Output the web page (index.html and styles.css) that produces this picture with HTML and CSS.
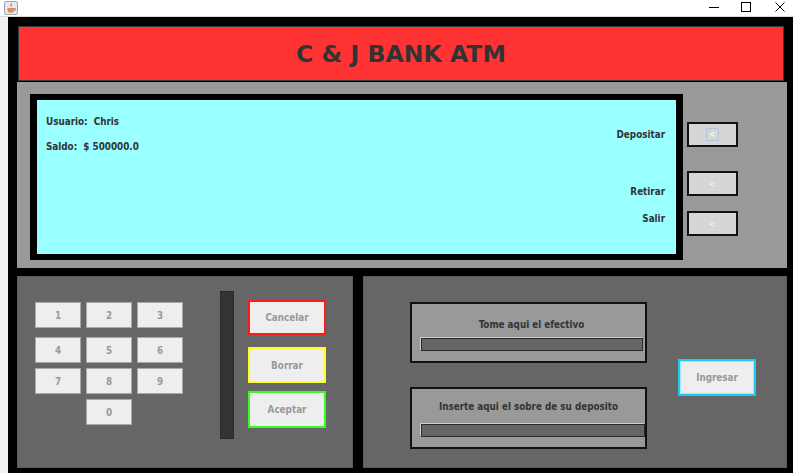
FILE: index.html
```html
<!DOCTYPE html>
<html lang="es">
<head>
    <meta charset="UTF-8">
    <meta name="viewport" content="width=device-width, initial-scale=1.0">
    <title>C &amp; J Bank ATM</title>
    <link rel="stylesheet" href="styles.css">
</head>
<body>
    <div class="titlebar">
        <svg class="app-icon" width="14" height="14" viewBox="0 0 14 14">
            <rect x="0.5" y="0.5" width="13" height="13" rx="1.5" fill="#e4e9f0" stroke="#98a6b8"/>
            <path d="M7 2.5c1.2 1 -0.8 1.8 0.2 3" stroke="#e2562b" stroke-width="1.1" fill="none"/>
            <path d="M3.5 7h6.5v2.2c0 1.6-1.4 2.6-3.2 2.6s-3.3-1-3.3-2.6z" fill="#f08a3a"/>
            <path d="M10 7.6h1c0.8 0 0.8 1.6 0 1.6h-1" stroke="#5b7fb0" stroke-width="0.9" fill="none"/>
        </svg>
        <div class="win-controls">
            <svg class="ctl ctl-min" width="10" height="10" viewBox="0 0 10 10"><path d="M0 5.5h10" stroke="#000" stroke-width="1"/></svg>
            <svg class="ctl ctl-max" width="10" height="10" viewBox="0 0 10 10"><rect x="0.5" y="0.5" width="9" height="9" fill="none" stroke="#000"/></svg>
            <svg class="ctl ctl-close" width="10" height="10" viewBox="0 0 10 10"><path d="M0.5 0.5l9 9M9.5 0.5l-9 9" stroke="#000" stroke-width="1"/></svg>
        </div>
    </div>

    <div class="frame">
        <header class="banner">C &amp; J BANK ATM</header>

        <section class="console">
            <div class="screen">
                <div class="info">
                    <p>Usuario:&nbsp; Chris</p>
                    <p>Saldo:&nbsp; $ 500000.0</p>
                </div>
                <div class="menu">
                    <p>Depositar</p>
                    <p class="menu-retirar">Retirar</p>
                    <p class="menu-salir">Salir</p>
                </div>
            </div>
            <div class="side-keys">
                <button class="side-key is-focused"><span>&lt;</span></button>
                <button class="side-key side-key-2">&lt;</button>
                <button class="side-key side-key-3">&lt;</button>
            </div>
        </section>

        <div class="lower">
            <section class="keypad-panel">
                <div class="keys">
                    <button class="key">1</button>
                    <button class="key">2</button>
                    <button class="key">3</button>
                    <button class="key">4</button>
                    <button class="key">5</button>
                    <button class="key">6</button>
                    <button class="key">7</button>
                    <button class="key">8</button>
                    <button class="key">9</button>
                    <button class="key key-zero">0</button>
                </div>
                <div class="card-slot"></div>
                <div class="actions">
                    <button class="act act-cancel">Cancelar</button>
                    <button class="act act-clear">Borrar</button>
                    <button class="act act-ok">Aceptar</button>
                </div>
            </section>

            <section class="tray-panel">
                <div class="trays">
                    <div class="tray tray-cash">
                        <p>Tome aqui el efectivo</p>
                        <div class="tray-slot"></div>
                    </div>
                    <div class="tray tray-deposit">
                        <p>Inserte aqui el sobre de su deposito</p>
                        <div class="tray-slot"></div>
                    </div>
                </div>
                <button class="act act-enter">Ingresar</button>
            </section>
        </div>
    </div>
</body>
</html>
```

FILE: styles.css
```css
*{
    box-sizing: border-box;
}

body{
    margin: 0;
    width: 793px;
    height: 473px;
    overflow: hidden;
    background-color: #f0f0f0;
    font-family: "DejaVu Sans Condensed", "Liberation Sans", sans-serif;
    font-weight: bold;
    font-size: 9.8px;
    color: #333;
}

p{
    margin: 0;
    line-height: 14px;
}

button{
    font-family: inherit;
    font-weight: bold;
    font-size: 9.8px;
    padding: 0;
    margin: 0;
}

/* window chrome */
.titlebar{
    height: 17px;
    background-color: #fff;
    border-bottom: 1px solid #dcdcdc;
    display: flex;
    align-items: flex-start;
    justify-content: space-between;
}
.app-icon{
    margin: 1px 0 0 4px;
}
.win-controls{
    display: flex;
    margin: 2px 8px 0 0;
}
.ctl-max{
    margin-left: 22px;
}
.ctl-close{
    margin-left: 24px;
}

.frame{
    margin-left: 8px;
    height: 456px;
    background-color: #000;
    padding-top: 9px;
}

.banner{
    margin-left: 10px;
    width: 766px;
    height: 55px;
    border: 1px solid #3c3c3c;
    background-color: #ff3333;
    color: #333;
    font-family: "DejaVu Sans", sans-serif;
    font-size: 23.6px;
    display: flex;
    align-items: center;
    justify-content: center;
}

/* screen + side keys */
.console{
    margin: 1px 0 0 9px;
    width: 770px;
    height: 186px;
    background-color: #999;
    display: flex;
    align-items: flex-start;
    padding: 12px 0 0 13px;
}

.screen{
    width: 653px;
    height: 166px;
    border-style: solid;
    border-color: #000;
    border-width: 6px 7px;
    background-color: #99ffff;
    display: flex;
    justify-content: space-between;
}
.info{
    padding: 15px 0 0 9px;
}
.info p{
    margin-bottom: 11px;
}
.menu{
    padding: 28px 11px 0 0;
    text-align: right;
}
.menu-retirar{
    margin-top: 43px;
}
.menu-salir{
    margin-top: 13px;
}

.side-keys{
    display: flex;
    flex-direction: column;
    margin: 28px 0 0 4px;
}
.side-key{
    width: 51px;
    height: 25px;
    border: 2px solid #111;
    background-color: #d6d6d6;
    color: #f4f4f4;
    font-size: 9px;
}
.side-key.is-focused span{
    display: inline-block;
    padding: 0 2px;
    border: 1px solid #b4c4dc;
    line-height: 11px;
}
.side-key-2{
    margin-top: 24px;
}
.side-key-3{
    margin-top: 15px;
}

/* lower half */
.lower{
    display: flex;
    gap: 10px;
    margin: 8px 0 0 9px;
}

.keypad-panel, .tray-panel{
    height: 192px;
    background-color: #666;
    border: 1px solid #5a5a5a;
    display: flex;
    align-items: flex-start;
}
.keypad-panel{
    width: 336px;
    padding-left: 17px;
}
.tray-panel{
    width: 424px;
    padding-left: 46px;
}

.keys{
    display: grid;
    grid-template-columns: repeat(3, 46px);
    grid-template-rows: 30px 26px 26px 26px;
    gap: 5px;
    margin-top: 25px;
}
.key{
    height: 26px;
    align-self: start;
    background-color: #eee;
    border: 1px solid #a8a8a8;
    color: #999;
}
.key-zero{
    grid-column: 2;
}

.card-slot{
    width: 14px;
    height: 148px;
    margin: 14px 0 0 37px;
    background-color: #333;
    border: 1px solid #2a2a2a;
}

.actions{
    display: flex;
    flex-direction: column;
    margin: 23px 0 0 14px;
}
.act{
    width: 78px;
    height: 35px;
    border: 2px solid #999;
    background-color: #eee;
    color: #999;
}
.act-cancel{
    border-color: #ff1a1a;
}
.act-clear{
    height: 36px;
    margin-top: 12px;
    border-color: #ffff1a;
}
.act-ok{
    height: 37px;
    margin-top: 8px;
    border-color: #33ff1a;
}

.trays{
    display: flex;
    flex-direction: column;
    gap: 24px;
    margin-top: 25px;
}
.tray{
    width: 237px;
    border: 2px solid #111;
    background-color: #999;
}
.tray p{
    text-align: center;
}
.tray-cash{
    height: 61px;
    padding-top: 14px;
}
.tray-cash p{
    padding-left: 6px;
}
.tray-deposit{
    height: 62px;
    padding-top: 11px;
}
.tray-slot{
    width: 222px;
    height: 13px;
    margin: 6px 0 0 9px;
    background-color: #666;
    border: 1px solid #2a2a2a;
    box-shadow: -1px -1px 0 #cfcfcf;
}
.tray-deposit .tray-slot{
    width: 224px;
    margin-top: 10px;
}

.act-enter{
    margin: 82px 0 0 31px;
    height: 37px;
    border-color: #1ec8f5;
    box-shadow: inset 0 0 0 1px #a6e8fa;
}
```
